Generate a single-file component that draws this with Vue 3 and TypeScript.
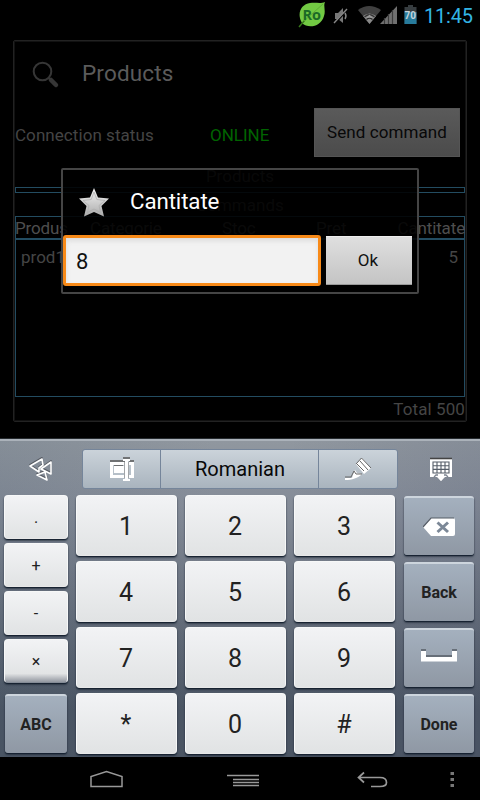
<script setup lang="ts">
const symbols: string[] = ['.', '+', '-', '×']
const digits: string[] = ['1', '2', '3', '4', '5', '6', '7', '8', '9', '*', '0', '#']
const headers: string[] = ['Produs', 'Categorie', 'Stoc', 'Pret', 'Cantitate']
</script>

<template>
  <div class="phone">
    <header class="status">
      <svg class="leaf" width="28" height="28" viewBox="0 0 28 28">
        <path d="M3 20C-1 11 4 3 12 2C18 1 22 3 27 1C25 5 28 9 26 15C23 26 10 28 4 22Z" fill="#72c943" />
        <path d="M1 26L7 19" stroke="#38791b" stroke-width="1.5" />
        <path d="M6 20L25 3" stroke="#5ead35" stroke-width="1" />
        <text x="4.500" y="18.500" class="ro">Ro</text>
      </svg>
      <svg class="mute" width="16" height="18" viewBox="0 0 16 18">
        <path d="M2 6H5L10 1V16L5 12H2Z" fill="#777" />
        <path d="M2 16L14 3" stroke="#000" stroke-width="2" />
        <path d="M1 16L14 2M12 6Q14 9 12 12" fill="none" stroke="#888" stroke-width="1.4" />
      </svg>
      <svg class="wifi" width="40" height="20" viewBox="0 0 40 20">
        <path d="M0 5Q11 -3 23 5L11.5 19Z" fill="#404040" />
        <path d="M5 11Q11.500 6 18 11L11.500 19Z" fill="#888" />
        <path d="M6.500 12Q11.500 7.500 16.500 12" fill="none" stroke="#333" stroke-width="1.2" />
        <path d="M8.500 13L11.500 9.500L14.500 13Z" fill="#999" />
        <path d="M8.500 14.500Q11.500 12 14.500 14.500" fill="none" stroke="#222" stroke-width="1.2" />
        <path d="M22 19L39 1V19Z" fill="#707070" />
        <path d="M26.500 13V19M30.500 9V19M34.500 5V19" stroke="#3c3c3c" stroke-width="1.2" />
      </svg>
      <svg class="battery" width="13" height="20" viewBox="0 0 13 20">
        <path d="M4 0H9V2H12.500V19H.5V2H4Z" fill="#373d40" />
        <path d="M.5 7H12.500V19H.5Z" fill="#277b9c" />
        <text x="0.500" y="14" class="pct">70</text>
      </svg>
      <span class="clock">11:45</span>
    </header>

    <main class="backdrop">
      <section class="window">
        <div class="titlebar">
          <svg width="28" height="28" viewBox="0 0 28 28">
            <circle cx="10.500" cy="10.500" r="8.800" fill="none" stroke="#363636" stroke-width="2" />
            <path d="M16.500 17L20 20" stroke="#363636" stroke-width="2" />
            <path d="M19 19L24 24" stroke="#363636" stroke-width="4.500" stroke-linecap="round" />
          </svg>
          <h1>Products</h1>
        </div>
        <div class="connection">
          <span class="label">Connection status</span>
          <span class="online">ONLINE</span>
          <button class="send">Send command</button>
        </div>
        <div class="caption">Products</div>
        <div class="empty"></div>
        <div class="caption second">Commands</div>
        <div class="table">
          <div class="thead"><span v-for="h in headers" :key="h">{{ h }}</span></div>
          <div class="trow"><span>prod1</span><span>5</span></div>
        </div>
        <div class="total">Total 500</div>
      </section>

      <section class="dialog">
        <div class="dtitle">
          <svg width="32" height="30" viewBox="0 0 32 30">
            <defs>
              <linearGradient id="star" x1="0" y1="0" x2="0" y2="1">
                <stop offset="0" stop-color="#f5f5f5" /><stop offset="1" stop-color="#aaa" />
              </linearGradient>
            </defs>
            <path d="M16 1L20 10.500L31 11.500L23.500 19L26 29.500L16 25L6 29.500L8.500 19L1 11.500L12 10.500Z" fill="url(#star)" />
            <path d="M16 5L18.800 12.500L27 13.500L21 18.500L22.500 25.500L16 22L9.500 25.500L11 18.500L5 13.500L13.200 12.500Z" fill="none" stroke="#aaa" stroke-width=".7" />
          </svg>
          <h2>Cantitate</h2>
        </div>
        <div class="form">
          <div class="field">8</div>
          <button class="ok">Ok</button>
        </div>
      </section>
    </main>

    <section class="keyboard">
      <div class="tools">
        <svg class="swype" width="26" height="26" viewBox="0 0 26 26" fill="none" stroke-width="1.6" stroke-linejoin="round">
          <g stroke="#555a62" transform="translate(0 -1.2)"><path d="M2 10L14 3L15 9L11 12V16ZM13 13L23 6V18ZM9 19L17 16L19 24Z" /></g>
          <g stroke="#fff"><path d="M2 10L14 3L15 9L11 12V16ZM13 13L23 6V18ZM9 19L17 16L19 24Z" /></g>
        </svg>
        <div class="segments">
          <div class="seg">
            <svg width="26" height="24" viewBox="0 0 26 24">
              <path d="M1 4H16M20 4H25M14 1H21M5 8H14M16 20H19" stroke="#555" stroke-width="1.500" />
              <path d="M1 5H15V8H4V18H15V21H1ZM20 5H25V21H20V18H22V8H20Z" fill="#fff" />
              <rect x="5" y="9" width="10" height="7" fill="#fff" />
              <path d="M14 2H21V4H19V22H21V24H14V22H16V4H14Z" fill="#fff" />
              <path d="M15.500 5V21M19.500 5V21" stroke="#999" stroke-width=".7" />
            </svg>
          </div>
          <div class="seg lang">Romanian</div>
          <div class="seg">
            <svg width="28" height="24" viewBox="0 0 28 24">
              <path d="M12 7L18 1L27 11L20 17Z" fill="#fff" />
              <path d="M12 7L17.500 1L27 11M16 4L24 13M13 7L20 14" fill="none" stroke="#666" stroke-width="1" />
              <path d="M1 21H8C9 17 10 15 11 13L13 16L18 17C14 21 8 23 1 23Z" fill="#fff" />
              <path d="M1 20H7L10 14L12 17H18" fill="none" stroke="#666" stroke-width="1" />
            </svg>
          </div>
        </div>
        <svg class="hide" width="24" height="24" viewBox="0 0 24 24">
          <path d="M1 2H23V20H16L12 24L8 20H1Z" fill="#fff" />
          <path d="M1 1.500H23" stroke="#444" stroke-width="1.600" />
          <path d="M4 5H20V16H4ZM4 8.700H20M4 12.400H20M8 5V16M12 5V16M16 5V16" fill="none" stroke="#555d68" stroke-width="1.100" />
          <path d="M5 20L7 18H9M19 20L17 18H15" fill="none" stroke="#7c8490" stroke-width="1.300" />
          <path d="M8 19H16L12 24Z" fill="#fff" />
        </svg>
      </div>
      <div class="keys">
        <div class="left">
          <div v-for="s in symbols" :key="s" class="key small">{{ s }}</div>
          <div class="key func abc">ABC</div>
        </div>
        <div class="grid">
          <div v-for="d in digits" :key="d" class="key">{{ d }}</div>
        </div>
        <div class="right">
          <div class="key func">
            <svg width="32" height="20" viewBox="0 0 32 20">
              <path d="M0 10L8 1H30Q32 1 32 3V17Q32 19 30 19H8Z" fill="#fff" />
              <path d="M0 10L8 1H31" fill="none" stroke="#555c66" stroke-width="1.200" />
              <path d="M14.500 5.500L25 15M25 5.500L14.500 15" stroke="#7c8897" stroke-width="3" />
            </svg>
          </div>
          <div class="key func">Back</div>
          <div class="key func space">
            <svg width="38" height="13" viewBox="0 0 38 13">
              <path d="M1 1H6M32 1H37M6 7H32" stroke="#555c66" stroke-width="1.500" />
              <path d="M1 2H6V8H32V2H37V12.500H1Z" fill="#fff" />
            </svg>
          </div>
          <div class="key func">Done</div>
        </div>
      </div>
    </section>

    <nav class="nav">
      <svg width="480" height="43" viewBox="0 0 480 43" fill="none" stroke="#999">
        <path d="M91 29.500V19.500L106.500 14.500L122 19.500V29.500Z" stroke-width="1.500" />
        <path d="M227 18.500H259M233 22.500H259M233 25.500H259M233 28.500H259" stroke-width="1.300" />
        <path d="M364 15.500L358.500 20.500L364 25.500M359 20.500H380Q386.500 20.500 386.500 25.500Q386.500 29.500 380 29.500H371" stroke-width="1.700" />
        <path d="M450.500 16.500H454M450.500 22.500H454M450.500 28.500H454" stroke-width="3" stroke="#777" />
      </svg>
    </nav>
  </div>
</template>

<style>
body { margin: 0; background: #000; }
</style>

<style scoped>
* { box-sizing: border-box; }
.phone { width: 480px; height: 800px; background: #000; font-family: Roboto, sans-serif; display: flex; flex-direction: column; overflow: hidden; }
h1, h2 { margin: 0; font-weight: 400; }
button { font-family: inherit; border: 0; padding: 0; }
svg { display: block; flex: none; }
.status { height: 32px; flex: none; display: flex; align-items: flex-start; padding-left: 298px; }
.leaf { margin-top: 1px; }
.ro { font: bold 14.5px "Open Sans", sans-serif; fill: #1b6a26; }
.mute { margin: 7px 0 0 7px; }
.wifi { margin: 5px 0 0 9px; }
.battery { margin: 5px 0 0 6px; }
.pct { font: bold 10px Roboto, sans-serif; fill: #c5d2d8; }
.clock { margin: 4px 0 0 7px; font-size: 20px; line-height: 24px; color: #33b5e5; letter-spacing: -.2px; white-space: nowrap; }
.backdrop { position: relative; height: 407px; flex: none; padding: 8px 13px 0; border-bottom: 1px solid #252a2e; }
.window { height: 382px; border: 1px solid #222; border-radius: 2px; padding: 0 1px; color: #454545; font-size: 17px; line-height: 20px; box-shadow: inset 0 0 0 1px #111; }
.titlebar { height: 67px; padding: 20px 0 0 17px; display: flex; }
.titlebar h1 { font-size: 22.5px; line-height: 26px; color: #5b5b5b; margin: -1px 0 0 22px; letter-spacing: .15px; }
.connection { height: 49px; display: flex; align-items: center; padding-top: 4px; }
.label { width: 195px; white-space: nowrap; letter-spacing: .06px; }
.online { color: #006400; width: 104px; }
.send { width: 146px; height: 49px; margin-top: -4px; padding-bottom: 2px; background: linear-gradient(#5a5a5a, #4b4b4b); border: 1px solid #555; color: #080808; font-size: 17px; letter-spacing: .08px; }
.caption { text-align: center; margin-top: 9px; height: 21px; color: #454545; }
.empty { height: 6px; border: 1px solid #234c61; }
.caption.second { height: 20px; margin-top: 3px; line-height: 18px; }
.table { height: 181px; border: 1px solid #234c61; }
.thead { height: 23px; border-bottom: 2px solid #234c61; display: grid; grid-template-columns: 75px 132px 94px 48px 1fr; line-height: 23px; color: #4e4e4e; letter-spacing: -.15px; margin-left: -1px; margin-right: -1px; }
.thead span:last-child { text-align: right; white-space: nowrap; }
.trow { display: flex; justify-content: space-between; padding: 7px 6px 0 5px; }
.total { text-align: right; line-height: 24px; letter-spacing: .1px; }
.dialog { position: absolute; left: 61px; top: 136px; width: 358px; height: 126px; background: rgba(0,0,0,.88); border: 2px solid #454545; border-radius: 2px; }
.dtitle { height: 65px; display: flex; padding: 17px 0 0 15px; }
.dtitle h2 { color: #fff; font-size: 22.3px; line-height: 26px; margin: 1px 0 0 20px; letter-spacing: -.1px; }
.form { display: flex; gap: 5px; }
.field { width: 258px; height: 51px; border: 3px solid #f88a18; border-radius: 3px; background: #f2f2f2; box-shadow: inset 0 3px 5px #ddd; font-size: 22px; line-height: 47px; padding-left: 10px; color: #111; }
.ok { width: 86px; height: 49px; margin-top: 1px; padding: 0 2px 2px 0; background: linear-gradient(#dfdfdf, #c4c4c4); border-top: 1px solid #eee; border-bottom: 1px solid #999; font-size: 17px; color: #111; }
.keyboard { height: 318px; flex: none; border-top: 2px solid #abb2ba; background: linear-gradient(90deg, rgba(60,80,100,.13), transparent 45%, transparent 60%, rgba(60,70,100,.13)), linear-gradient(#90979f, #858c98 20%, #4b5563 85%); }
.tools { height: 54px; display: flex; padding-top: 8px; }
.swype { margin: 7px 28px 0 28px; }
.segments { width: 316px; height: 40px; display: grid; grid-template-columns: 78px 158px 78px; border: 1px solid #75859a; border-radius: 3px; background: linear-gradient(#cbd3da, #a9b4be); }
.seg { display: flex; align-items: center; justify-content: center; border-right: 1px solid #75859a; }
.seg:first-child svg { margin-top: -1px; }
.seg:last-child { border-right: 0; }
.lang { color: #080808; font-size: 20px; padding-left: 1px; }
.hide { margin: 8px 0 0 31px; }
.keys { display: flex; padding-left: 4px; }
.left { width: 64px; display: flex; flex-direction: column; gap: 4px; }
.grid { margin-left: 8px; display: grid; grid-template-columns: repeat(3, 101px); grid-auto-rows: 61px; gap: 5px 8px; }
.right { margin: 1px 0 0 9px; display: grid; grid-template-columns: 70px; grid-auto-rows: 59px; gap: 7px; }
.key { display: flex; align-items: center; justify-content: center; padding: 2px 1px 0 0; border-radius: 4px; background: linear-gradient(#f2f3f5, #e1e3e4); border: 1px solid #f7f8f8; border-bottom-color: #e8e8e8; box-shadow: 0 1px 1px #14202f, 0 2px 2px rgba(20,30,45,.5); font-size: 25px; color: #222; }
.key.small { height: 44px; font-size: 16px; padding: 0; }
.key.small:nth-child(4) { background: linear-gradient(#f2f3f5, #e2e4e5 80%, #9297a0); border-bottom-color: #848b96; }
.key.func { background: linear-gradient(#a4b0be, #8f98a4); border: 0; border-top: 2px solid #cdd5dd; border-radius: 3px; font-size: 16px; font-weight: 700; padding: 0; }
.key.abc { height: 59px; width: 62px; margin: 7px 0 0 1px; }
.space svg { margin-top: -7px; }
.nav { height: 43px; background: #000; }
</style>
